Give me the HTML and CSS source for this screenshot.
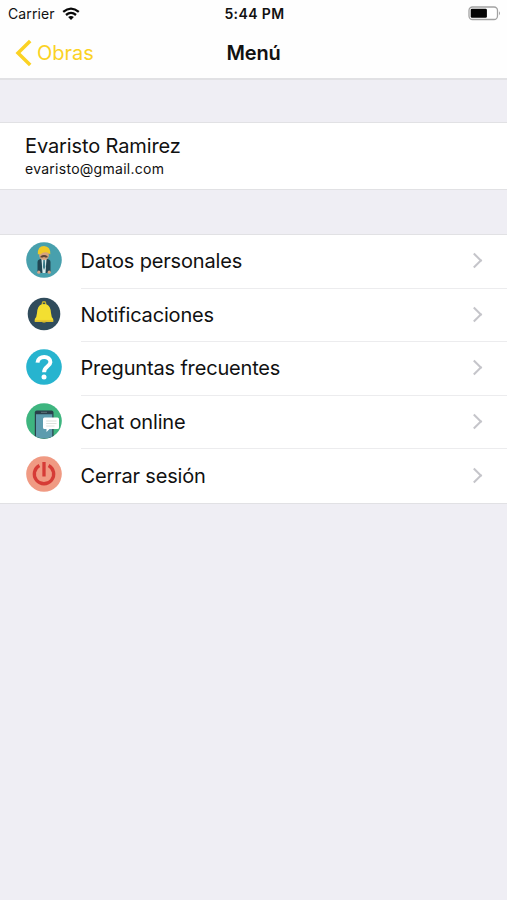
FILE: index.html
```html
<!DOCTYPE html>
<html lang="es">
<head>
<meta charset="utf-8">
<title>Menú</title>
<link rel="stylesheet" href="styles.css">
</head>
<body>
<header class="top">
  <div class="status">
    <div class="carrier"><span>Carrier</span>
      <svg width="18" height="14" viewBox="0 0 18 14" fill="none" stroke="#080808" stroke-width="2.3"><path d="M1.2 4.9Q9-1.6 16.8 4.9M4 8Q9 3.8 14 8"/><path d="M9 13L6.1 10.1Q9 7.9 11.9 10.1Z" fill="#080808" stroke="none"/></svg>
    </div>
    <span class="time">5:44 PM</span>
    <svg class="battery" width="33" height="15" viewBox="0 0 33 15"><rect x="1" y="1" width="28.5" height="12.5" rx="3.5" fill="#fff" stroke="#a2a2a2" stroke-width="1.3"/><rect x="2.7" y="2.8" width="16.2" height="9" rx="1.3" fill="#050505"/><path d="M31 5.2Q33 7.2 31 9.3Z" fill="#a2a2a2"/></svg>
  </div>
  <nav class="nav">
    <a class="back"><svg width="18" height="28" viewBox="0 0 18 28" fill="none" stroke="#fbd223" stroke-width="3.5"><path d="M15.2 2L3 14L15.2 26"/></svg><span>Obras</span></a>
    <h1>Menú</h1>
  </nav>
</header>
<section class="profile">
  <div class="name">Evaristo Ramirez</div>
  <div class="email">evaristo@gmail.com</div>
</section>
<ul class="menu">
  <li>
    <svg class="icon" viewBox="0 0 36 36"><circle cx="18" cy="18" r="17.8" fill="#48a0ad"/><path d="M11.5 30V20Q11.5 16.5 18 16.5T24.5 20V30L22 31H14Z" fill="#214653"/><path d="M15.5 17H20.5L19.5 31H16.5Z" fill="#d8ebed"/><path d="M17.3 18H18.8L19.3 25L18 28L16.9 25Z" fill="#397c8b"/><path d="M13.2 9H22.8V14Q22 18 18 18T13.2 14Z" fill="#d6a47e"/><path d="M14.5 14.2Q18 11.8 21.5 14.2V15.4H19L18 14.8L17 15.4H14.5Z" fill="#584337"/><path d="M11.8 12.3Q11.5 4 18 4Q24.8 4.5 24.3 12.3L20.5 10.2Q16 10 15 12.3Z" fill="#f0ca26"/><circle cx="12.8" cy="30.2" r="1.6" fill="#d5a486"/><circle cx="23.2" cy="30.2" r="1.6" fill="#d5a486"/></svg>
    <span class="row">Datos personales<i class="chevron"></i></span>
  </li>
  <li>
    <svg class="icon" viewBox="0 0 36 36"><circle cx="18" cy="18" r="16.3" fill="#304c5c"/><circle cx="18" cy="7.4" r="1.7" fill="none" stroke="#c6b329" stroke-width="1.4"/><path d="M15.5 8.3H20.5Q24.6 10 25 17Q25.3 21 27.2 23V25.7H8.8V23Q10.7 21 11 17Q11.4 10 15.5 8.3Z" fill="#f3df31"/><path d="M8.8 23.9H27.2V25.7H8.8Z" fill="#e6c52d"/><path d="M15.5 25.7H20.5Q18 28 15.5 25.7Z" fill="#c6a927"/></svg>
    <span class="row">Notificaciones<i class="chevron"></i></span>
  </li>
  <li>
    <svg class="icon" viewBox="0 0 36 36"><circle cx="18" cy="18" r="17.8" fill="#27b4cf"/><path d="M11.5 13.7C11.8 6 24.8 6.3 24.4 13.2C24.2 17.6 18.1 17.2 18.1 23.3" fill="none" stroke="#fff" stroke-width="4"/><circle cx="18" cy="28" r="2.5" fill="#fff"/></svg>
    <span class="row">Preguntas frecuentes<i class="chevron"></i></span>
  </li>
  <li>
    <svg class="icon" viewBox="0 0 36 36"><circle cx="18" cy="18" r="17.8" fill="#3eb57f"/><path d="M8.8 33V9.5Q8.8 7.5 10.8 7.5H25.5Q27.5 7.5 27.5 9.5V33Q18 38 8.8 33Z" fill="#29404b"/><path d="M10 11.3H26.3V33.7Q18 37 10 33.7Z" fill="#5d9cae"/><path d="M15 9.3H21" stroke="#60727a"/><path d="M18.5 14.5H31.5Q33 14.5 33 16V24.5Q33 26 31.5 26H23.5L20.5 29V26H18.5Q17 26 17 24.5V16Q17 14.5 18.5 14.5Z" fill="#fff"/><path d="M20.2 18H30.5M20.2 20.5H30.5M20.2 23H28.5" stroke="#dce2dc" stroke-width="1"/></svg>
    <span class="row">Chat online<i class="chevron"></i></span>
  </li>
  <li>
    <svg class="icon" viewBox="0 0 36 36"><circle cx="18" cy="18" r="17.8" fill="#f09a83"/><path d="M13.4 9.5A9.7 9.7 0 1 0 22.6 9.5M18 6V20.5" fill="none" stroke="#d63b36" stroke-width="3.3"/></svg>
    <span class="row">Cerrar sesión<i class="chevron"></i></span>
  </li>
</ul>
</body>
</html>
```
FILE: styles.css
```css
* { box-sizing: border-box; }
body { margin: 0; height: 900px; background: #efeef4; color: #111; font-family: Inter, "Liberation Sans", sans-serif; overflow: hidden; }
.top { height: 80px; background: #fefefe; border-bottom: 2px solid #e1e1e4; }
.status { height: 27px; padding: 0 6px 0 8px; display: grid; grid-template-columns: 1fr auto 1fr; align-items: center; font-size: 14px; }
.carrier { display: flex; align-items: center; gap: 7px; letter-spacing: 0.1px; }
.time { font-weight: 600; font-size: 14px; letter-spacing: 0.4px; }
.battery { justify-self: end; }
.nav { height: 51px; padding: 0 15px; display: grid; grid-template-columns: 1fr auto 1fr; align-items: center; }
.back { display: flex; align-items: center; gap: 4px; color: #fbd223; font-size: 20px; }
h1 { margin: 0; font-size: 20px; font-weight: 600; letter-spacing: -0.2px; }
.profile { margin-top: 42px; height: 68px; padding: 11px 25px 0; background: #fff; border-top: 1px solid #e1e1e4; border-bottom: 1px solid #e1e1e4; }
.name { font-size: 20px; line-height: 25px; letter-spacing: -0.12px; }
.email { font-size: 14px; line-height: 20px; letter-spacing: 0.27px; }
.menu { list-style: none; margin: 44px 0 0; padding: 0 0 0 25.5px; background: #fff; border-top: 1px solid #e1e1e4; border-bottom: 1px solid #e1e1e4; }
li { height: 53.6px; display: flex; gap: 19px; }
.icon { width: 36px; height: 36px; flex: none; margin-top: 7px; }
.row { flex: 1; display: flex; align-items: center; justify-content: space-between; padding-right: 27px; font-size: 20px; letter-spacing: -0.17px; border-bottom: 1px solid #ececee; }
li:last-child .row { border-bottom-color: transparent; }
.chevron { width: 11px; height: 11px; margin-top: -1px; border: solid #c5c5ca; border-width: 2px 2px 0 0; transform: rotate(45deg); }
```
